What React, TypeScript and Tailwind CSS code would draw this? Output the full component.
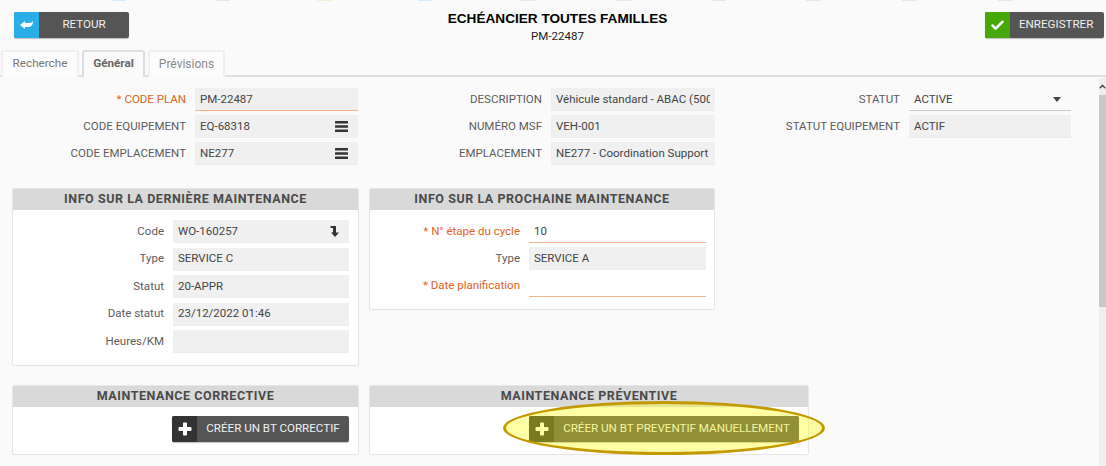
import React from "react";
import { Check, ChevronUp } from "lucide-react";

const plusIcon = (
  <svg width="14" height="14" viewBox="0 0 14 14" fill="white"><path d="M5 1.500q0-1 1-1h2q1 0 1 1V5h3.500q1 0 1 1v2q0 1-1 1H9v3.500q0 1-1 1H6q-1 0-1-1V9H1.500q-1 0-1-1V6q0-1 1-1H5z" /></svg>
);

const menuIcon = (
  <svg width="13" height="11" viewBox="0 0 13 11" fill="#333"><rect y="0" width="13" height="2.400" rx="0.500" /><rect y="4.300" width="13" height="2.400" rx="0.500" /><rect y="8.600" width="13" height="2.400" rx="0.500" /></svg>
);

function Field({ value, label, req, w = "w-[163px]", lw = "w-[174px]", icon, line, grey }: { value?: string; label: string; req?: boolean; w?: string; lw?: string; icon?: React.ReactNode; line?: "orange" | "grey"; grey?: boolean }) {
  return (
    <div className="flex h-[23px] items-center gap-[9px]">
      <div className={`${lw} text-right text-[11.5px] whitespace-nowrap ${req ? "text-[#e2601a]" : "text-[#5c5c5c]"}`}>{req ? "* " : ""}{label}</div>
      <div className={`${w} h-[23px] flex items-center justify-between pl-[5px] pt-[1px] ${icon ? "pr-[10px]" : "pr-[5px]"} text-[11.5px] text-[#444] border-b ${line === "orange" ? "border-[#f6b48a]" : line === "grey" ? "border-[#c8c8c8]" : "border-[#ececec]"} ${line && !grey ? "bg-transparent" : "bg-[#f0f0f0]"}`}>
        <span className="overflow-hidden whitespace-nowrap">{value}</span>
        {icon}
      </div>
    </div>
  );
}

function Card({ title, className, children }: { title: string; className: string; children: React.ReactNode }) {
  return (
    <div className={`${className} bg-white border border-[#e6e6e6] rounded-[2px]`}>
      <div className="h-[21px] bg-[#d9d9d9] flex items-center justify-center text-[12.5px] font-bold tracking-[0.55px] text-[#4a4a4a] whitespace-nowrap">{title}</div>
      {children}
    </div>
  );
}

function ActionButton({ accent, label, icon, className, textClass }: { accent: string; label: string; icon: React.ReactNode; className: string; textClass: string }) {
  return (
    <div className={`${className} h-[26px] flex rounded-[2px] bg-[#555] overflow-hidden shadow-[0_1px_1px_rgba(0,0,0,0.25)]`}>
      <div className={`${accent} w-[25px] shrink-0 flex items-center justify-center`}>{icon}</div>
      <div className={`flex-1 flex items-center text-[11.6px] text-[#f0f0f0] whitespace-nowrap ${textClass}`}>{label}</div>
    </div>
  );
}

export default function App() {
  const marks = [111, 215, 317, 418, 520, 616, 711, 806, 902, 998];
  return (
    <div className="relative w-[1106px] h-[466px] overflow-hidden bg-[#fafafa] font-['Roboto',sans-serif]">
      <div className="absolute top-0 left-0 flex">
        {marks.map((x, i) => (
          <span key={x} style={{ marginLeft: i === 0 ? x : x - marks[i - 1] - 15 }} className={`block w-[15px] h-[1px] ${i === 0 || i === 3 ? "bg-[#d6ecfa]" : i === 2 ? "bg-[#e8f4d4]" : "bg-[#e6e6e6]"}`} />
        ))}
      </div>

      <div className="flex justify-between pt-[12px] pl-[14px] pr-[2px] h-[50px]">
        <ActionButton
          className="w-[115px]"
          accent="bg-[#29aee8]"
          textClass="justify-center"
          label="RETOUR"
          icon={<svg width="13" height="8" viewBox="0 0 13 8" fill="white"><path d="M0 4 5 0v2h4q3 0 4-2 0 6-5 6H5v2z" /></svg>}
        />
        <div className="text-center ml-[1px]">
          <div className="text-[13.6px] leading-[16px] mt-[-1px] font-bold text-black font-['Liberation_Sans',sans-serif] whitespace-nowrap">ECHÉANCIER TOUTES FAMILLES</div>
          <div className="text-[11.5px] leading-[16px] pt-[1px] text-[#222]">PM-22487</div>
        </div>
        <ActionButton
          className="w-[119px]"
          accent="bg-[#47a80a]"
          textClass="pl-[9px]"
          label="ENREGISTRER"
          icon={<Check size={15} strokeWidth={4} color="white" />}
        />
      </div>

      <div className="flex items-end h-[27px] border-b-2 border-[#dedede] pl-[1px] gap-[3px]">
        <div className="h-[27px] -mb-[2px] pb-[1px] w-[78px] flex items-center justify-center text-[11.7px] text-[#777] bg-[#fcfcfc] border-2 border-b-0 border-[#f0f0f0] rounded-t-[3px]">Recherche</div>
        <div className="h-[27px] -mb-[2px] pb-[1px] w-[63px] flex items-center justify-center text-[11.7px] font-bold text-[#666] bg-[#fafafa] border-2 border-b-0 border-[#dddddd] rounded-t-[3px]">Général</div>
        <div className="h-[27px] -mb-[2px] pb-[1px] w-[77px] flex items-center justify-center text-[12px] text-[#8a8a8a] bg-[#fcfcfc] border-2 border-b-0 border-[#f0f0f0] rounded-t-[3px]">Prévisions</div>
      </div>

      <div className="absolute right-0 top-[78px] bottom-0 w-[7px] bg-[#efefef] flex flex-col items-center">
        <ChevronUp size={9} strokeWidth={4} color="#555" className="mt-[4px]" />
        <div className="mt-[4px] w-full h-[212px] bg-[#c8c8c8]" />
      </div>

      <div className="flex pl-[12px] pt-[11px] gap-[6px]">
        <div className="flex flex-col gap-[4px]">
          <Field label="CODE PLAN" req value="PM-22487" line="orange" grey />
          <Field label="CODE EQUIPEMENT" value="EQ-68318" icon={menuIcon} />
          <Field label="CODE EMPLACEMENT" value="NE277" icon={menuIcon} />
        </div>
        <div className="flex flex-col gap-[4px]">
          <Field label="DESCRIPTION" lw="w-[178px]" w="w-[164px]" value="Véhicule standard - ABAC (500" />
          <Field label="NUMÉRO MSF" lw="w-[178px]" w="w-[164px]" value="VEH-001" />
          <Field label="EMPLACEMENT" lw="w-[178px]" w="w-[164px]" value="NE277 - Coordination Support" />
        </div>
        <div className="flex flex-col gap-[4px] ml-[-1px]">
          <Field label="STATUT" lw="w-[180px]" w="w-[162px]" line="grey" value="ACTIVE" icon={<span className="block border-x-[4px] border-x-transparent border-t-[5px] border-t-[#444]" />} />
          <Field label="STATUT EQUIPEMENT" lw="w-[180px]" w="w-[162px]" value="ACTIF" />
        </div>
      </div>

      <div className="flex items-start pl-[12px] pt-[23px] gap-[10px]">
        <Card title="INFO SUR LA DERNIÈRE MAINTENANCE" className="w-[347px] h-[178px]">
          <div className="flex flex-col gap-[4.500px] pt-[10px]">
            <Field label="Code" lw="w-[151px]" w="w-[176px]" value="WO-160257" icon={<svg width="9" height="11" viewBox="0 0 9 11" fill="#333"><path d="M0.500 0H6v6.500h3L5 11 1 6.500h2V2H0.500z" /></svg>} />
            <Field label="Type" lw="w-[151px]" w="w-[176px]" value="SERVICE C" />
            <Field label="Statut" lw="w-[151px]" w="w-[176px]" value="20-APPR" />
            <Field label="Date statut" lw="w-[151px]" w="w-[176px]" value="23/12/2022 01:46" />
            <Field label="Heures/KM" lw="w-[151px]" w="w-[176px]" />
          </div>
        </Card>
        <Card title="INFO SUR LA PROCHAINE MAINTENANCE" className="w-[346px] h-[122px]">
          <div className="flex flex-col gap-[4px] pt-[10px]">
            <Field label="N° étape du cycle" req lw="w-[150px]" w="w-[177px]" value="10" line="orange" />
            <Field label="Type" lw="w-[150px]" w="w-[177px]" value="SERVICE A" />
            <Field label="Date planification" req lw="w-[150px]" w="w-[177px]" line="orange" />
          </div>
        </Card>
      </div>

      <div className="absolute left-[12px] top-[385px] flex gap-[10px]">
        <Card title="MAINTENANCE CORRECTIVE" className="w-[347px] h-[70px]">
          <div className="flex justify-end pt-[9px] pr-[9px]">
            <ActionButton className="w-[177px]" accent="bg-[#333]" textClass="justify-center" label="CRÉER UN BT CORRECTIF" icon={plusIcon} />
          </div>
        </Card>
        <Card title="MAINTENANCE PRÉVENTIVE" className="w-[440px] h-[70px]">
          <div className="flex justify-end pt-[9px] pr-[9px]">
            <ActionButton className="w-[270px]" accent="bg-[#333]" textClass="justify-center" label="CRÉER UN BT PREVENTIF MANUELLEMENT" icon={plusIcon} />
          </div>
        </Card>
      </div>

      <div className="absolute left-[503px] top-[401px] w-[322px] h-[54px] rounded-[50%] border-[3px] border-[#c29a00] bg-[#ffff00]/35" />
    </div>
  );
}
